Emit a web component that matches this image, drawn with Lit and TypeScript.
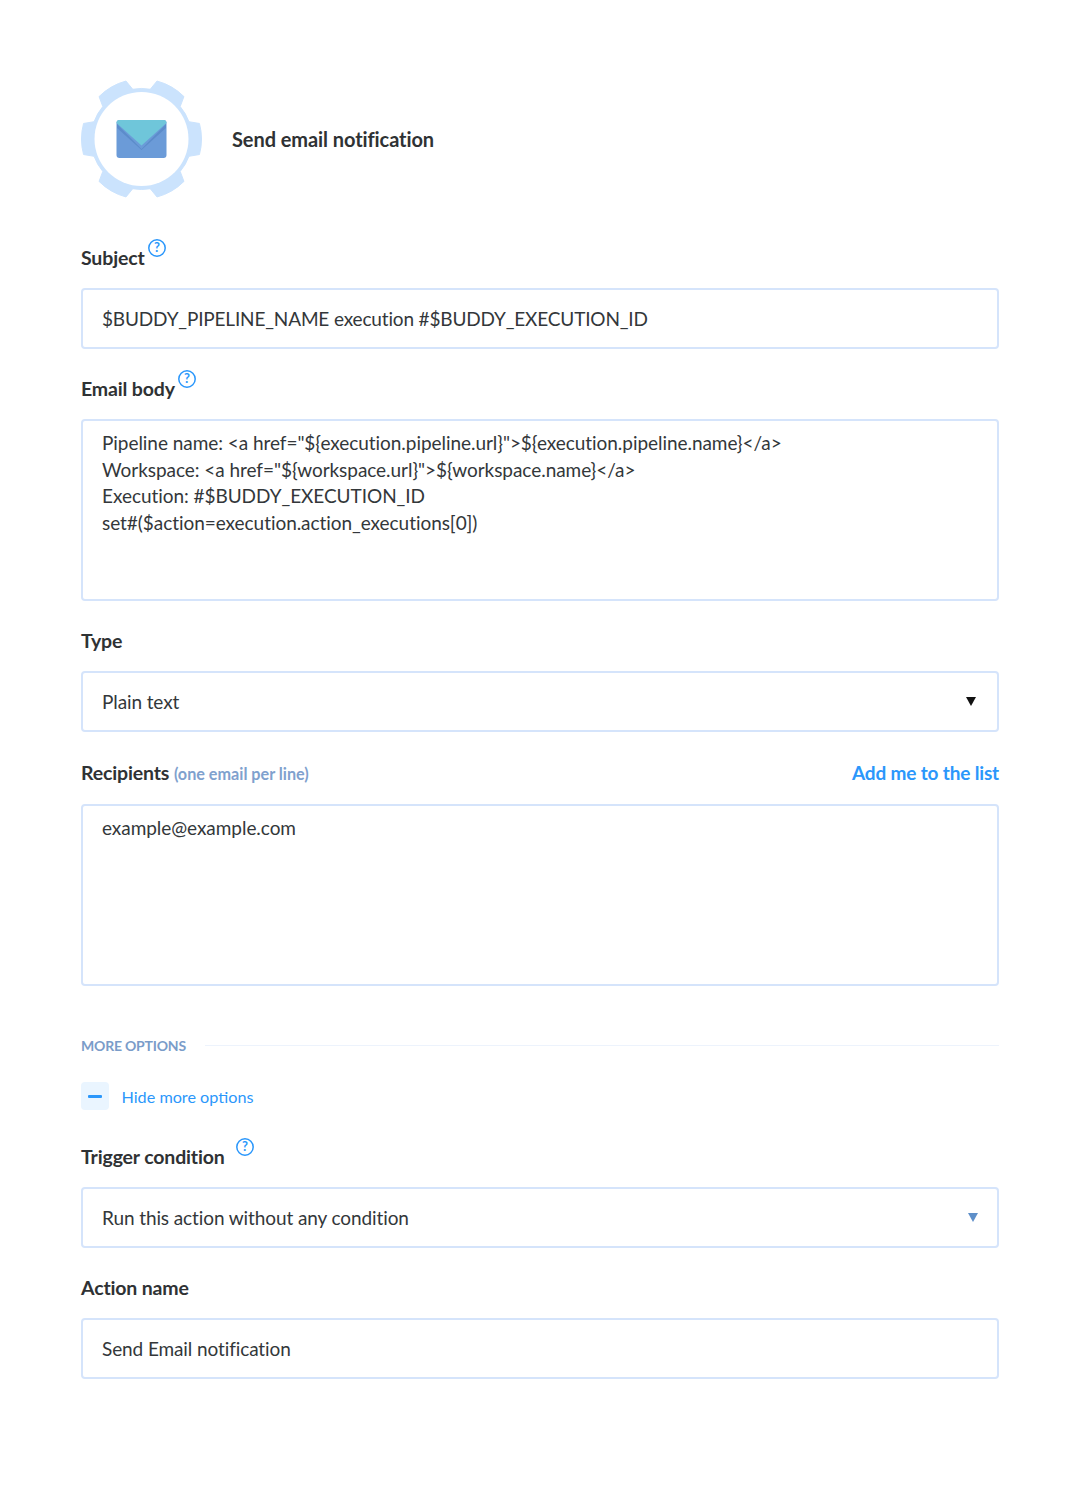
import { LitElement, html, css, svg } from "lit";
import { customElement } from "lit/decorators.js";

function gearPath(cx: number, cy: number) {
  const pt = (r: number, deg: number) => {
    const a = (deg * Math.PI) / 180;
    return `${(cx + r * Math.cos(a)).toFixed(2)} ${(cy + r * Math.sin(a)).toFixed(2)}`;
  };
  const R = 60, r = 50.5;
  let d = "";
  for (let i = 0; i < 6; i++) {
    const c = i * 60;
    d += `${i === 0 ? "M" : "L"}${pt(r, c - 20)} L${pt(R, c - 15)} A${R} ${R} 0 0 1 ${pt(R, c + 15)} L${pt(r, c + 20)} A${r} ${r} 0 0 1 ${pt(r, c + 40)} `;
  }
  return d + "Z";
}

const help = svg`<svg class="help" width="18" height="18" viewBox="0 0 18 18"><circle cx="9" cy="9" r="8.2" fill="none" stroke="#2b97fb" stroke-width="1.5"/><text x="9" y="13.4" text-anchor="middle" font-family="Lato" font-size="13" font-weight="700" fill="#2b97fb">?</text></svg>`;

@customElement("app-root")
export class AppRoot extends LitElement {
  static styles = css`
    :host { display: block; width: 1080px; height: 1500px; background: #fff; font-family: Lato, "Liberation Sans", sans-serif; color: #2f3234; }
    .page { display: flex; flex-direction: column; padding: 80px 81px 0 81px; box-sizing: border-box; }
    .head { display: flex; align-items: center; gap: 30px; height: 118px; }
    .gear { display: block; width: 121px; height: 118px; }
    .title { font-size: 20px; font-weight: 700; letter-spacing: -0.08px; margin-top: -1px; }
    .label { display: flex; align-items: flex-start; font-size: 19.5px; font-weight: 700; line-height: 24px; letter-spacing: -0.15px; }
    .label .help { margin: -7px 0 0 3.5px; }
    .label.tc .help { margin-left: 11px; }
    .l1 { margin-top: 48px; }
    .l2 { margin-top: 28px; }
    .box { box-sizing: border-box; border: 2px solid #d5e4fb; border-radius: 4px; margin-top: 18px; padding: 0 19px; font-size: 19px; color: #33373a; background: #fff; letter-spacing: -0.1px; }
    .single { height: 61px; display: flex; align-items: center; justify-content: space-between; }
    .tight { letter-spacing: -0.16px; }
    .multi { height: 182px; padding-top: 9px; line-height: 26.6px; white-space: pre; letter-spacing: -0.05px; }
    .arrow { width: 0; height: 0; border-left: 5px solid transparent; border-right: 5px solid transparent; border-top: 9px solid #111; margin-right: 2px; }
    .arrow.blue { border-top-color: #5e8fc9; margin-right: 0; }
    .rec { display: flex; justify-content: space-between; align-items: baseline; margin-top: 29px; }
    .rec .label { display: block; }
    .hint { font-size: 16.2px; font-weight: 700; color: #7fa1ce; letter-spacing: 0; }
    .add { font-size: 19px; font-weight: 700; color: #2b97fb; letter-spacing: -0.16px; }
    .more { display: flex; align-items: center; gap: 19px; margin-top: 51px; font-size: 14px; font-weight: 700; color: #7a9cc9; letter-spacing: -0.2px; }
    .more i { flex: 1; height: 1px; background: #edf3fc; }
    .toggle { display: flex; align-items: center; gap: 12.5px; margin-top: 28px; font-size: 16.2px; color: #2b97fb; }
    .pm { width: 28px; height: 28px; border-radius: 4px; background: #eaf5ff; display: flex; align-items: center; justify-content: center; }
    .pm b { width: 14px; height: 3px; background: #2b97fb; border-radius: 1px; }
    .tc { margin-top: 35px; }
  `;

  render() {
    return html`<div class="page">
      <div class="head">
        <svg class="gear" viewBox="0 0 121 118">
          <path d=${gearPath(60.5, 59)} fill="#cbe3fd" stroke="#cbe3fd" stroke-width="1" stroke-linejoin="round"/>
          <circle cx="60.5" cy="59" r="47" fill="#fff"/>
          <rect x="35.5" y="40" width="50" height="38" rx="3" fill="#6b9bd8"/>
          <path d="M36 44 L60.5 69 L85 44 L85 48 L60.5 70 L36 48Z" fill="#5c8ccb"/>
          <path d="M35.5 43 a3 3 0 0 1 3-3 h44 a3 3 0 0 1 3 3 L60.5 65.5 Z" fill="#6fc6da"/>
        </svg>
        <div class="title">Send email notification</div>
      </div>
      <div class="label l1">Subject ${help}</div>
      <div class="box single tight">$BUDDY_PIPELINE_NAME execution #$BUDDY_EXECUTION_ID</div>
      <div class="label l2">Email body ${help}</div>
      <div class="box multi">Pipeline name: &lt;a href="\${execution.pipeline.url}"&gt;\${execution.pipeline.name}&lt;/a&gt;
Workspace: &lt;a href="\${workspace.url}"&gt;\${workspace.name}&lt;/a&gt;
Execution: #$BUDDY_EXECUTION_ID
set#($action=execution.action_executions[0])</div>
      <div class="label l2">Type</div>
      <div class="box single">Plain text<span class="arrow"></span></div>
      <div class="rec"><div class="label">Recipients <span class="hint">(one email per line)</span></div><div class="add">Add me to the list</div></div>
      <div class="box multi">example@example.com</div>
      <div class="more">MORE OPTIONS<i></i></div>
      <div class="toggle"><span class="pm"><b></b></span>Hide more options</div>
      <div class="label tc">Trigger condition ${help}</div>
      <div class="box single">Run this action without any condition<span class="arrow blue"></span></div>
      <div class="label l2">Action name</div>
      <div class="box single">Send Email notification</div>
    </div>`;
  }
}
